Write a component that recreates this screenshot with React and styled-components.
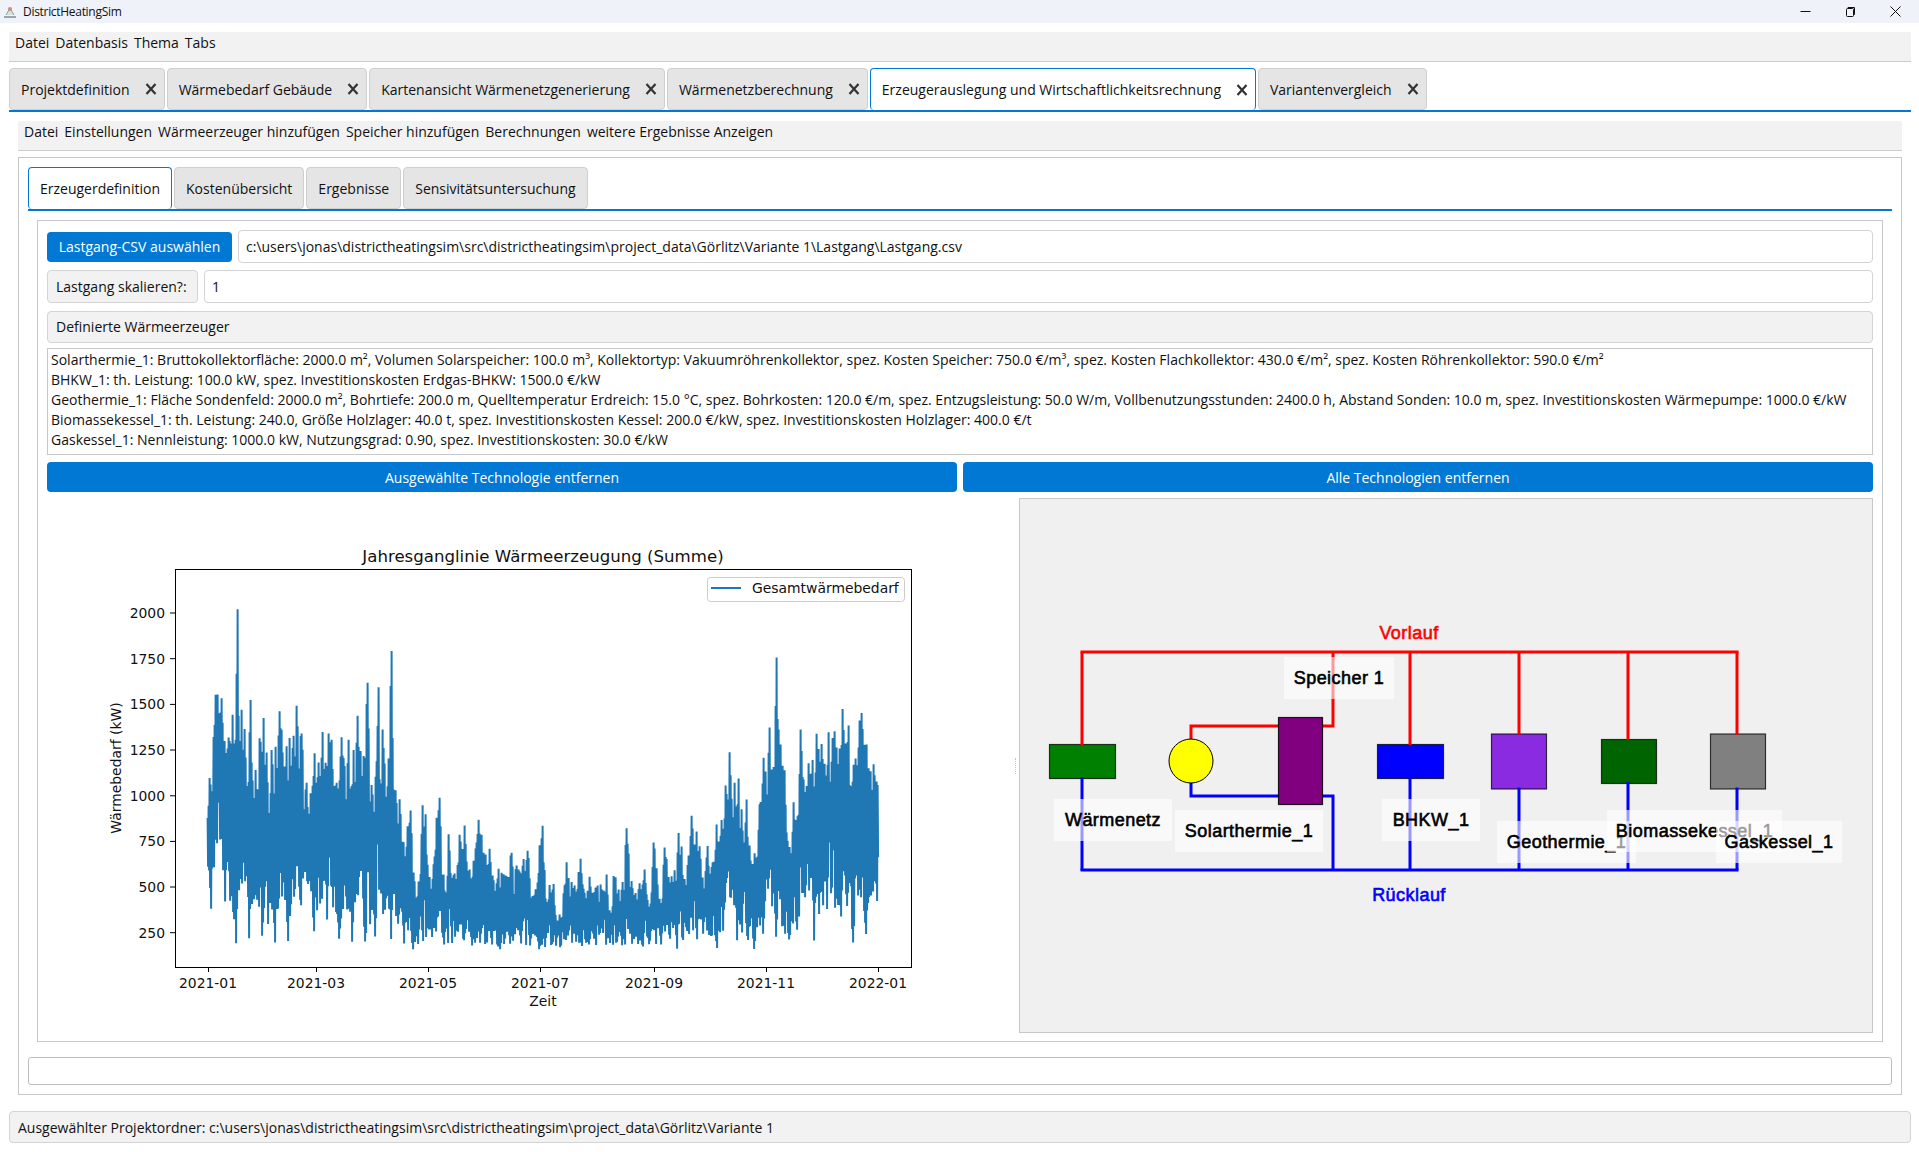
import React from "react";
import styled, { createGlobalStyle } from "styled-components";

const BLUE = "#0078d4";
const UI_FONT = `"Open Sans", "Noto Sans", sans-serif`;

const Global = createGlobalStyle`
  html, body { margin: 0; padding: 0; background: #fff; }
  body { font-family: ${UI_FONT}; font-size: 14px; color: #111; }
  * { box-sizing: border-box; }
`;

const Window = styled.div`
  width: 1919px;
  height: 1152px;
  display: flex;
  flex-direction: column;
  overflow: hidden;
`;

const TitleBar = styled.div`
  height: 23px;
  background: #eff2f8;
  display: flex;
  align-items: center;
  padding-left: 3px;
  font-size: 12px;
  letter-spacing: -0.3px;
  gap: 6px;
`;

const WinButtons = styled.div`
  margin-left: auto;
  display: flex;
  align-items: center;
  padding-right: 18px;
  gap: 34px;
`;

const Body = styled.div`
  flex: 1;
  display: flex;
  flex-direction: column;
  padding: 9px 8px 9px 9px;
`;

const MenuBar = styled.div`
  height: 30px;
  flex: none;
  background: #f2f2f2;
  border-bottom: 1px solid #ccc;
  display: flex;
  align-items: center;
  gap: 6px;
  padding: 0 6px 8px;
`;

const TabBar = styled.div`
  display: flex;
  flex: none;
  gap: 2px;
  height: 44px;
  margin-top: 6px;
  border-bottom: 2px solid ${BLUE};
`;

const Tab = styled.div`
  height: 42px;
  display: flex;
  align-items: center;
  gap: ${(p) => (p.$closable ? 15 : 0)}px;
  padding: ${(p) => (p.$closable ? "0 7px 0 11px" : "0 11px")};
  background: ${(p) => (p.$active ? "#fff" : "#e5e5e5")};
  border: 1px solid ${(p) => (p.$active ? BLUE : "#cfcfcf")};
  border-bottom: ${(p) => (p.$active ? "none" : "1px solid #cfcfcf")};
  border-radius: 4px;
  white-space: nowrap;
`;

const Panel = styled.div`
  flex: 1;
  display: flex;
  flex-direction: column;
  padding: 9px 9px 0;
`;

const OuterFrame = styled.div`
  height: 938px;
  margin-top: 6px;
  border: 1px solid #c8c8c8;
  padding: 9px;
  display: flex;
  flex-direction: column;
`;

const SubTabs = styled(TabBar)`
  margin-top: 0;
`;

const InnerFrame = styled.div`
  height: 822px;
  margin: 9px 9px 0;
  border: 1px solid #c8c8c8;
  padding: 9px 9px 0;
  display: flex;
  flex-direction: column;
`;

const Row = styled.div`
  display: flex;
  align-items: center;
  gap: 6px;
  height: 33px;
  flex: none;
  margin-bottom: 7px;
`;

const BlueButton = styled.div`
  background: ${BLUE};
  color: #fff;
  height: 30px;
  border-radius: 4px;
  display: flex;
  align-items: center;
  justify-content: center;
  flex: ${(p) => (p.$grow ? 1 : "none")};
  width: ${(p) => (p.$grow ? "auto" : "185px")};
  white-space: nowrap;
`;

const Field = styled.div`
  flex: 1;
  height: 33px;
  border: 1px solid #d4d4d4;
  border-radius: 4px;
  display: flex;
  align-items: center;
  padding: 0 7px;
  white-space: nowrap;
`;

const Caption = styled.div`
  flex: ${(p) => (p.$grow ? 1 : "none")};
  width: ${(p) => (p.$grow ? "auto" : "151px")};
  height: ${(p) => (p.$grow ? 32 : 33)}px;
  background: #f2f2f2;
  border: 1px solid #d4d4d4;
  border-radius: 4px;
  display: flex;
  align-items: center;
  padding: 0 8px;
  white-space: nowrap;
`;

const Details = styled.div`
  height: 107px;
  flex: none;
  margin-top: -2px;
  border: 1px solid #c8c8c8;
  padding: 1px 3px;
  line-height: 20px;
  white-space: nowrap;
  overflow: hidden;
`;

const ButtonRow = styled.div`
  display: flex;
  gap: 6px;
  margin-top: 7px;
  flex: none;
`;

const Split = styled.div`
  display: flex;
  margin-top: 6px;
  height: 535px;
  flex: none;
`;

const ChartPane = styled.div`
  width: 966px;
  flex: none;
`;

const SplitHandle = styled.div`
  width: 6px;
  flex: none;
  display: flex;
  align-items: center;
  justify-content: center;
  &::before {
    content: "";
    width: 1px;
    height: 16px;
    border-left: 1px dotted #c4c4c4;
  }
`;

const DiagramPane = styled.div`
  flex: none;
  width: 854px;
  height: 535px;
  background: #f0f0f0;
  border: 1px solid #c8c8c8;
`;

const Progress = styled.div`
  height: 28px;
  flex: none;
  margin-top: 15px;
  border: 1px solid #bdbdbd;
  border-radius: 3px;
`;

const StatusBar = styled.div`
  height: 32px;
  flex: none;
  margin-top: 15px;
  background: #f2f2f2;
  border: 1px solid #d4d4d4;
  border-radius: 4px;
  display: flex;
  align-items: center;
  padding: 0 8px;
`;

const Drawing = styled.svg`
  display: block;
`;

const CloseX = () => (
  <svg width="12" height="12" viewBox="0 0 12 12">
    <path d="M1.5 1 L10.5 11 M10.5 1 L1.5 11" stroke="#333" strokeWidth="2.2" fill="none" />
  </svg>
);

// ---- chart data, read off the screenshot (zoomed coords)
const toPage = (x0, y0) => ([x, y]) => [x0 + x / 3, y0 + y / 3];

const TOP = [
  ...[[352,880],[360,720],[372,610],[378,465],[383,495],[395,505],[405,650],[416,622],[427,540],[436,700],[442,170],[448,680],[455,535],[465,605],[474,800],[481,478],[489,800],[497,718],[510,615],[520,555],[530,670],[545,660],[557,650],[570,533],[590,650],[600,620],[610,625],[620,525],[635,612],[650,760],[662,790],[673,668],[687,700],[697,598],[707,700],[717,598],[725,630],[740,760],[755,620],[775,610],[782,780],[790,668],[802,548],[812,665],[822,680],[832,438],[845,770],[865,433],[872,770],[879,563],[885,735],[895,720],[904,335],[917,788],[930,810],[940,940],[952,895],[961,827],[975,1075],[985,1070],[998,822],[1006,840],[1020,1060],[1030,1015],[1040,860],[1049,802],[1060,1040],[1077,903],[1095,1040],[1110,903],[1125,885],[1140,1030],[1165,865],[1175,915],[1186,975],[1198,950],[1212,1060],[1225,1015],[1240,1035],[1265,968],[1285,1020],[1313,962],[1332,1110],[1348,970]].map(toPage(90, 530)),
  ...[[5,1035],[33,968],[50,1018],[70,1090],[85,960],[105,1070],[127,872],[140,1120],[150,1058],[160,1058],[180,1160],[200,995],[225,1070],[243,980],[255,1100],[270,1035],[303,1065],[320,1033],[335,1150],[342,1015],[365,1080],[380,892],[395,1055],[420,1060],[435,1015],[450,1140],[462,915],[480,1120],[495,938],[515,1040],[535,905],[545,950],[555,1060],[575,855],[590,905],[600,955],[622,945],[637,1005],[650,882],[665,870],[677,765],[690,657],[705,767],[715,737],[725,840],[740,808],[750,965],[765,970],[780,810],[790,688],[808,582],[820,740],[830,375],[842,648],[855,728],[870,970],[880,812],[890,875],[903,570],[925,700],[937,695],[950,610],[965,642],[985,607],[1003,600],[1018,667],[1027,535],[1045,580],[1060,710],[1078,575],[1085,548],[1100,645],[1112,725],[1122,700],[1132,730],[1135,860]].map(toPage(500, 530)),
];

const BOTTOM = [
  ...[[352,1010],[363,1140],[380,930],[405,1115],[420,1110],[439,1245],[455,1050],[478,1230],[500,1100],[517,1222],[535,1180],[555,1240],[575,1090],[594,1235],[612,1100],[632,1130],[655,1060],[672,1205],[690,1120],[712,1170],[730,1130],[748,1230],[770,1130],[787,1240],[805,1090],[825,1235],[855,1220],[880,1150],[902,1230],[925,1180],[942,1240],[970,1258],[1348,1258]].map(toPage(90, 530)),
  ...[[0,1258],[530,1258],[548,1230],[650,1258],[670,1200],[690,1100],[712,1235],[745,1230],[763,1258],[790,1210],[805,1070],[828,1220],[866,1230],[890,1205],[915,1100],[942,1232],[982,1135],[1023,1160],[1040,1120],[1059,1240],[1075,1090],[1097,1220],[1120,1080],[1132,1115],[1135,940]].map(toPage(500, 530)),
];

function interp(points, x) {
  for (let i = 1; i < points.length; i++) {
    if (x <= points[i][0]) {
      const [x0, y0] = points[i - 1];
      const [x1, y1] = points[i];
      const t = x1 === x0 ? 0 : (x - x0) / (x1 - x0);
      return y0 + (y1 - y0) * Math.max(0, t);
    }
  }
  return points[points.length - 1][1];
}

function nearest(points, x) {
  let best = 99;
  for (const p of points) best = Math.min(best, Math.abs(p[0] - x));
  return best;
}

function buildSeries() {
  let seed = 1234567;
  const rnd = () => {
    seed = (seed * 16807) % 2147483647;
    return seed / 2147483647;
  };
  const step = 0.5;
  let d = "";
  let i = 0;
  for (let x = 207.6; x <= 878.2; x += step) {
    const up = interp(TOP, x);
    const lo = interp(BOTTOM, x);
    const span = lo - up;
    let y;
    if (i % 2 === 0) {
      const peak = nearest(TOP, x) < step;
      const fade = Math.min(1, nearest(TOP, x) / 2);
      y = peak ? up : up + span * (0.04 + 0.4 * fade * rnd());
    } else {
      const dip = nearest(BOTTOM, x) < step;
      const fade = Math.min(1, nearest(BOTTOM, x) / 2);
      y = dip ? lo : lo - span * (0.03 + 0.4 * fade * rnd());
    }
    d += `${i === 0 ? "M" : "L"}${x.toFixed(1)} ${y.toFixed(1)}`;
    i++;
  }
  return d;
}

const SERIES = buildSeries();
const X_TICKS = [[208, "2021-01"], [316, "2021-03"], [428, "2021-05"], [540, "2021-07"], [654, "2021-09"], [766, "2021-11"], [878, "2022-01"]];
const Y_TICKS = [[613, "2000"], [658.7, "1750"], [704.4, "1500"], [750, "1250"], [795.8, "1000"], [841.4, "750"], [887, "500"], [932.7, "250"]];

const ChartText = styled.text`
  font-family: "DejaVu Sans", sans-serif;
  font-size: ${(p) => p.$size || 13.9}px;
  fill: #111;
`;

function Chart() {
  return (
    <Drawing width="966" height="535" viewBox="47 498 966 535">
      <clipPath id="axes"><rect x="175" y="569" width="736" height="398" /></clipPath>
      <path d={SERIES} clipPath="url(#axes)" fill="none" stroke="#1f77b4" strokeWidth="2" strokeLinejoin="bevel" />
      <rect x="175.5" y="569.5" width="736" height="398" fill="none" stroke="#000" />
      {X_TICKS.map(([x, label]) => (
        <g key={label}>
          <line x1={x + 0.5} x2={x + 0.5} y1="967" y2="972" stroke="#000" />
          <ChartText x={x} y="988" textAnchor="middle">{label}</ChartText>
        </g>
      ))}
      {Y_TICKS.map(([y, label]) => (
        <g key={label}>
          <line x1="170" x2="175" y1={y} y2={y} stroke="#000" />
          <ChartText x="165" y={y + 5} textAnchor="end">{label}</ChartText>
        </g>
      ))}
      <ChartText x="543" y="562" $size={16.6} textAnchor="middle">Jahresganglinie Wärmeerzeugung (Summe)</ChartText>
      <ChartText x="543" y="1006" textAnchor="middle">Zeit</ChartText>
      <ChartText x="121" y="768" textAnchor="middle" transform="rotate(-90 121 768)">Wärmebedarf (kW)</ChartText>
      <rect x="707.5" y="577.5" width="197" height="24" rx="3" fill="#fff" fillOpacity="0.8" stroke="#ccc" />
      <line x1="711" x2="741" y1="588" y2="588" stroke="#1f77b4" strokeWidth="2" />
      <ChartText x="752" y="593">Gesamtwärmebedarf</ChartText>
    </Drawing>
  );
}

const PipeLabel = styled.text`
  font-family: "Liberation Sans", Arial, sans-serif;
  font-size: 18px;
  letter-spacing: 0.45px;
  fill: ${(p) => p.$color || "#000"};
  stroke: ${(p) => p.$color || "#000"};
  stroke-width: 0.6px;
`;

const UNITS = [
  { x: 1049, y: 744, w: 66, h: 34, fill: "#008000", cx: 1082 },
  { x: 1377, y: 744, w: 66, h: 34, fill: "#0000ff", cx: 1410 },
  { x: 1491, y: 733.5, w: 55, h: 55, fill: "#8a2be2", cx: 1519 },
  { x: 1601, y: 739, w: 55, h: 44, fill: "#006400", cx: 1628 },
  { x: 1710, y: 733.5, w: 55, h: 55, fill: "#808080", cx: 1737 },
];

const LABELS = [
  { text: "Wärmenetz", x: 1054, y: 799, w: 118 },
  { text: "Speicher 1", x: 1284, y: 657, w: 110 },
  { text: "Solarthermie_1", x: 1175, y: 810, w: 148 },
  { text: "BHKW_1", x: 1382, y: 799, w: 98 },
  { text: "Geothermie_1", x: 1497, y: 821, w: 139 },
  { text: "Biomassekessel_1", x: 1607, y: 810, w: 175 },
  { text: "Gaskessel_1", x: 1716, y: 821, w: 126 },
];

function Schematic() {
  return (
    <Drawing width="852" height="533" viewBox="1020 499 852 533">
      {UNITS.map((u) => (
        <g key={u.cx}>
          <rect x={u.x + 0.5} y={u.y + 0.5} width={u.w} height={u.h} fill={u.fill} stroke="#000" strokeOpacity="0.75" strokeWidth="1.2" />
          <line x1={u.cx} x2={u.cx} y1="652" y2={u.y + 1} stroke="#f00" strokeWidth="3" />
          <line x1={u.cx} x2={u.cx} y1={u.y + u.h - 1} y2="870" stroke="#00f" strokeWidth="3" />
        </g>
      ))}
      <path d="M1080.5 652H1738.5" stroke="#f00" strokeWidth="3" />
      <path d="M1080.5 870H1738.5" stroke="#00f" strokeWidth="3" />
      <path d="M1191 740V726H1279M1322 726H1333V652" fill="none" stroke="#f00" strokeWidth="3" />
      <path d="M1191 782V796H1279M1322 796H1333V870" fill="none" stroke="#00f" strokeWidth="3" />
      <circle cx="1191" cy="761" r="22" fill="#ff0" stroke="#000" strokeWidth="1" />
      <rect x="1278.5" y="717.5" width="44" height="87" fill="#800080" stroke="#000" strokeOpacity="0.85" strokeWidth="1.2" />
      <PipeLabel x="1409" y="639" textAnchor="middle" $color="#f00">Vorlauf</PipeLabel>
      <PipeLabel x="1409" y="901" textAnchor="middle" $color="#00f">Rücklauf</PipeLabel>
      {LABELS.map((l) => (
        <g key={l.text}>
          <rect x={l.x} y={l.y} width={l.w} height="42" fill="#fff" fillOpacity="0.6" />
          <PipeLabel x={l.x + l.w / 2} y={l.y + 26.5} textAnchor="middle">{l.text}</PipeLabel>
        </g>
      ))}
    </Drawing>
  );
}

const MAIN_TABS = [
  "Projektdefinition",
  "Wärmebedarf Gebäude",
  "Kartenansicht Wärmenetzgenerierung",
  "Wärmenetzberechnung",
  "Erzeugerauslegung und Wirtschaftlichkeitsrechnung",
  "Variantenvergleich",
];
const SUB_TABS = ["Erzeugerdefinition", "Kostenübersicht", "Ergebnisse", "Sensivitätsuntersuchung"];

export default function App() {
  return (
    <Window>
      <Global />
      <TitleBar>
        <svg width="14" height="16" viewBox="0 0 14 16">
          <path d="M1 13h12" stroke="#9aa5ab" strokeWidth="2" />
          <path d="M3 11 L7 4 L11 11" fill="#d9dee0" stroke="#7fa6a8" />
          <circle cx="7" cy="5" r="2" fill="#d98a6a" />
        </svg>
        DistrictHeatingSim
        <WinButtons>
          <svg width="11" height="11" viewBox="0 0 11 11"><path d="M0.5 5.5H10.5" stroke="#111" /></svg>
          <svg width="11" height="11" viewBox="0 0 11 11" fill="none"><path d="M3 2.5V1.5H9.5V8.5H8.5" stroke="#111" /><rect x="1.5" y="2.5" width="7" height="8" rx="1" stroke="#111" /></svg>
          <svg width="11" height="11" viewBox="0 0 11 11"><path d="M0.5 0.5L10.5 10.5M10.5 0.5L0.5 10.5" stroke="#111" /></svg>
        </WinButtons>
      </TitleBar>
      <Body>
        <MenuBar>
          <span>Datei</span><span>Datenbasis</span><span>Thema</span><span>Tabs</span>
        </MenuBar>
        <TabBar>
          {MAIN_TABS.map((t, i) => (
            <Tab key={t} $closable $active={i === 4}>{t}<CloseX /></Tab>
          ))}
        </TabBar>
        <Panel>
          <MenuBar>
            <span>Datei</span><span>Einstellungen</span><span>Wärmeerzeuger hinzufügen</span>
            <span>Speicher hinzufügen</span><span>Berechnungen</span><span>weitere Ergebnisse Anzeigen</span>
          </MenuBar>
          <OuterFrame>
            <SubTabs>
              {SUB_TABS.map((t, i) => (
                <Tab key={t} $active={i === 0}>{t}</Tab>
              ))}
            </SubTabs>
            <InnerFrame>
              <Row>
                <BlueButton>Lastgang-CSV auswählen</BlueButton>
                <Field>{"c:\\users\\jonas\\districtheatingsim\\src\\districtheatingsim\\project_data\\Görlitz\\Variante 1\\Lastgang\\Lastgang.csv"}</Field>
              </Row>
              <Row>
                <Caption>Lastgang skalieren?:</Caption>
                <Field>1</Field>
              </Row>
              <Row>
                <Caption $grow>Definierte Wärmeerzeuger</Caption>
              </Row>
              <Details>
                <div>Solarthermie_1: Bruttokollektorfläche: 2000.0 m², Volumen Solarspeicher: 100.0 m³, Kollektortyp: Vakuumröhrenkollektor, spez. Kosten Speicher: 750.0 €/m³, spez. Kosten Flachkollektor: 430.0 €/m², spez. Kosten Röhrenkollektor: 590.0 €/m²</div>
                <div>BHKW_1: th. Leistung: 100.0 kW, spez. Investitionskosten Erdgas-BHKW: 1500.0 €/kW</div>
                <div>Geothermie_1: Fläche Sondenfeld: 2000.0 m², Bohrtiefe: 200.0 m, Quelltemperatur Erdreich: 15.0 °C, spez. Bohrkosten: 120.0 €/m, spez. Entzugsleistung: 50.0 W/m, Vollbenutzungsstunden: 2400.0 h, Abstand Sonden: 10.0 m, spez. Investitionskosten Wärmepumpe: 1000.0 €/kW</div>
                <div>Biomassekessel_1: th. Leistung: 240.0, Größe Holzlager: 40.0 t, spez. Investitionskosten Kessel: 200.0 €/kW, spez. Investitionskosten Holzlager: 400.0 €/t</div>
                <div>Gaskessel_1: Nennleistung: 1000.0 kW, Nutzungsgrad: 0.90, spez. Investitionskosten: 30.0 €/kW</div>
              </Details>
              <ButtonRow>
                <BlueButton $grow>Ausgewählte Technologie entfernen</BlueButton>
                <BlueButton $grow>Alle Technologien entfernen</BlueButton>
              </ButtonRow>
              <Split>
                <ChartPane><Chart /></ChartPane>
                <SplitHandle />
                <DiagramPane><Schematic /></DiagramPane>
              </Split>
            </InnerFrame>
            <Progress />
          </OuterFrame>
        </Panel>
        <StatusBar>{"Ausgewählter Projektordner: c:\\users\\jonas\\districtheatingsim\\src\\districtheatingsim\\project_data\\Görlitz\\Variante 1"}</StatusBar>
      </Body>
    </Window>
  );
}
